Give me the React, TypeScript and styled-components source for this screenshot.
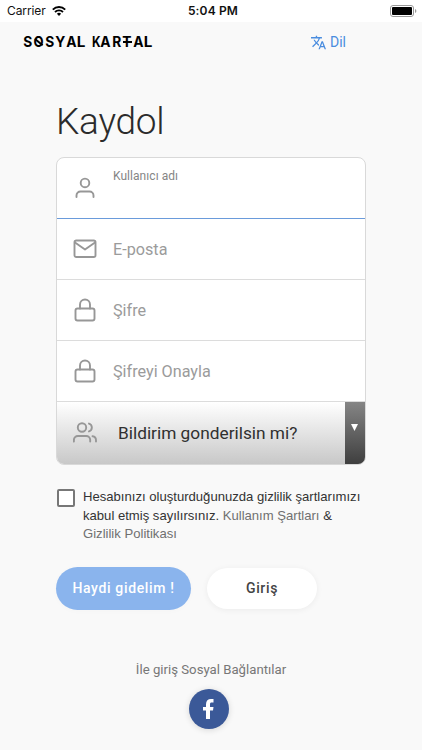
import React from 'react';
import styled, { createGlobalStyle } from 'styled-components';

const Global = createGlobalStyle`
  * { box-sizing: border-box; }
  body { margin: 0; background: #f9f9f9; font-family: Roboto, sans-serif; color: #333; }
`;

const Screen = styled.main`
  width: 422px;
  height: 750px;
  overflow: hidden;
  background: #f9f9f9;
`;

const StatusBar = styled.header`
  display: grid;
  grid-template-columns: 1fr auto 1fr;
  align-items: center;
  height: 22px;
  padding: 0 5px 0 7px;
  background: #fff;
  color: #111;
  font: 400 12px/22px Inter, sans-serif;
`;

const Carrier = styled.div`
  display: flex;
  align-items: center;
  gap: 6px;
  letter-spacing: -0.1px;
`;

const Clock = styled.div`
  margin-left: 2px;
  font-weight: 600;
  letter-spacing: 0.15px;
`;

const Battery = styled.svg`
  justify-self: end;
  display: block;
`;

const TopBar = styled.div`
  display: flex;
  justify-content: space-between;
  align-items: center;
  height: 40px;
  padding: 0 76px 0 22px;
`;

const Logo = styled.div`
  display: flex;
  color: #000;
  font: 700 14.5px/16px Inter, sans-serif;
`;

const Letter = styled.span<{ $w: number; $mark?: 'slash' | 'bar' }>`
  position: relative;
  display: flex;
  justify-content: center;
  width: ${(p) => p.$w}px;
  &::after {
    content: ${(p) => (p.$mark ? '""' : 'none')};
    position: absolute;
    left: 1px;
    right: 1px;
    top: 7px;
    height: 1.6px;
    background: #000;
    transform: ${(p) => (p.$mark === 'slash' ? 'rotate(40deg)' : 'none')};
  }
`;

const Glyph = styled.span<{ $scale: number }>`
  transform: scaleX(${(p) => p.$scale});
`;

const Language = styled.a`
  display: flex;
  align-items: center;
  gap: 4px;
  color: #4a8ddf;
  font-size: 14px;
  line-height: 16px;
`;

const Content = styled.section`
  padding: 0 56px;
`;

const Title = styled.h1`
  margin: 37px 0 0;
  height: 58px;
  font-weight: 300;
  font-size: 37px;
  line-height: 46px;
  letter-spacing: -0.25px;
  color: #2b2b2b;
`;

const Card = styled.form`
  display: grid;
  grid-template-rows: 61px 61px 61px 61px 62px;
  height: 308px;
  overflow: hidden;
  border: 1px solid #d9d9d9;
  border-radius: 8px;
  background: #fff;
`;

const Field = styled.label<{ $active?: boolean }>`
  display: flex;
  align-items: ${(p) => (p.$active ? 'flex-start' : 'center')};
  padding-left: 16px;
  border-bottom: 1px solid ${(p) => (p.$active ? '#6a9bdb' : '#dcdcdc')};
  color: #999;
`;

const FieldIcon = styled.svg<{ $drop?: number }>`
  flex: none;
  width: 24px;
  height: 24px;
  margin-top: ${(p) => p.$drop ?? 0}px;
  fill: none;
  stroke: #979797;
  stroke-width: 1.9;
  stroke-linecap: round;
  stroke-linejoin: round;
`;

const Label = styled.span<{ $small?: boolean }>`
  margin-left: 16px;
  margin-top: ${(p) => (p.$small ? 10 : 2)}px;
  font-size: ${(p) => (p.$small ? 12 : 16.2)}px;
  line-height: ${(p) => (p.$small ? 16 : 20)}px;
  letter-spacing: ${(p) => (p.$small ? 0.05 : 0)}px;
  color: ${(p) => (p.$small ? '#858585' : '#9b9b9b')};
`;

const Select = styled.div`
  display: flex;
  align-items: center;
  padding-left: 16px;
  background: linear-gradient(#fff, #c8c8c8);
`;

const SelectText = styled.span`
  flex: 1;
  margin-left: 21px;
  font-size: 17.3px;
  color: #303030;
`;

const Arrow = styled.div`
  display: grid;
  justify-items: center;
  align-self: stretch;
  width: 20px;
  padding: 22px 2px 0 0;
  background: linear-gradient(#858585, #3f3f3f);
`;

const Consent = styled.div`
  display: flex;
  gap: 8px;
  margin: 23px 0 0 1px;
`;

const Checkbox = styled.span`
  flex: none;
  width: 18px;
  height: 18px;
  margin-top: 1px;
  border: 2px solid #777;
  border-radius: 2px;
  background: #fff;
`;

const ConsentText = styled.p`
  margin: 0;
  color: #333;
  white-space: nowrap;
  font: 400 13.1px/18.5px "Liberation Sans", sans-serif;
`;

const Link = styled.a`
  color: #707070;
`;

const Actions = styled.div`
  display: flex;
  align-items: center;
  gap: 16px;
  margin-top: 23px;
`;

const Button = styled.button<{ $primary?: boolean }>`
  width: ${(p) => (p.$primary ? 135 : 110)}px;
  height: ${(p) => (p.$primary ? 43 : 41)}px;
  padding: 0;
  border: 0;
  border-radius: 22px;
  background: ${(p) => (p.$primary ? '#8ab4ed' : '#fff')};
  color: ${(p) => (p.$primary ? '#fff' : '#444')};
  box-shadow: 0 1px 6px rgba(0, 0, 0, ${(p) => (p.$primary ? 0.02 : 0.06)});
  font: 500 14px/20px Roboto, sans-serif;
  letter-spacing: 0.65px;
`;

const Social = styled.div`
  display: flex;
  flex-direction: column;
  align-items: center;
  gap: 10px;
  margin-top: 51px;
  font-size: 13.2px;
  line-height: 18px;
  color: #777;
`;

const Facebook = styled.a`
  display: grid;
  place-items: center;
  width: 40px;
  height: 40px;
  margin-right: 5px;
  border-radius: 50%;
  background: #3b5998;
  box-shadow: 0 1px 6px rgba(0, 0, 0, 0.14);
`;

const Lock = () => (
  <FieldIcon viewBox="0 0 24 24">
    <rect x="2.5" y="10.5" width="19" height="12" rx="2" />
    <path d="M7 10.5V6.5a5 5 0 0 1 10 0v4" />
  </FieldIcon>
);

const letters: [string, number, ('slash' | 'bar')?][] = [
  ['S', 10.5], ['O', 11.5, 'slash'], ['S', 10.5], ['Y', 11], ['A', 11], ['L', 10], [' ', 5],
  ['K', 9], ['A', 10.5], ['R', 11], ['T', 10.5, 'bar'], ['A', 11], ['L', 10],
];

const glyphScale: Record<string, number> = { K: 0.82, L: 1.05, O: 0.9 };

export default function App() {
  return (
    <Screen>
      <Global />
      <StatusBar>
        <Carrier>
          Carrier
          <svg width="14" height="10" viewBox="0 0 14 10" fill="none" stroke="#000" strokeWidth="1.9">
            <path d="M.8 3.6a8.8 8.8 0 0 1 12.4 0M3 6a5.8 5.8 0 0 1 8 0" />
            <path d="M4.9 7.7a3 3 0 0 1 4.2 0L7 9.9z" fill="#000" stroke="none" />
          </svg>
        </Carrier>
        <Clock>5:04 PM</Clock>
        <Battery width="27" height="12" viewBox="0 0 27 12">
          <rect x=".5" y=".5" width="23" height="11" rx="2.5" fill="#fff" stroke="#999" />
          <rect x="2" y="2" width="20" height="8" rx="1" fill="#000" />
          <path d="M25 4v4q1.4-.6 1.4-2T25 4z" fill="#999" />
        </Battery>
      </StatusBar>
      <TopBar>
        <Logo>
          {letters.map(([char, width, mark], i) => (
            <Letter key={i} $w={width} $mark={mark}>
              <Glyph $scale={glyphScale[char] ?? 0.95}>{char}</Glyph>
            </Letter>
          ))}
        </Logo>
        <Language>
          <svg width="15" height="15" viewBox="1 2 22 20" fill="#4a8ddf">
            <path d="M12.87 15.07l-2.54-2.51.03-.03A17.52 17.52 0 0 0 14.07 6H17V4h-7V2H8v2H1v2h11.17C11.5 7.92 10.44 9.75 9 11.35 8.07 10.32 7.3 9.19 6.69 8h-2c.73 1.63 1.73 3.17 2.98 4.56l-5.09 5.02L4 19l5-5 3.11 3.11.76-2.04zM18.5 10h-2L12 22h2l1.12-3h4.75L21 22h2l-4.5-12zm-2.62 7l1.62-4.33L19.12 17h-3.24z" />
          </svg>
          Dil
        </Language>
      </TopBar>
      <Content>
        <Title>Kaydol</Title>
        <Card>
          <Field $active>
            <FieldIcon viewBox="0 0 24 24" $drop={18}>
              <circle cx="12" cy="6.9" r="4.3" />
              <path d="M3.5 21v-1.5a4 4 0 0 1 4-4h9a4 4 0 0 1 4 4V21" />
            </FieldIcon>
            <Label $small>Kullanıcı adı</Label>
          </Field>
          <Field>
            <FieldIcon viewBox="0 0 24 24">
              <rect x="1.5" y="3.5" width="21" height="16.5" rx="1.8" />
              <path d="M2 5.5l10 7 10-7" />
            </FieldIcon>
            <Label>E-posta</Label>
          </Field>
          <Field><Lock /><Label>Şifre</Label></Field>
          <Field><Lock /><Label>Şifreyi Onayla</Label></Field>
          <Select>
            <FieldIcon viewBox="0 0 24 24">
              <circle cx="9" cy="6.5" r="4.2" />
              <path d="M.9 20.5V19a4 4 0 0 1 4-4h8.3a4 4 0 0 1 4 4v1.5M16 2.6a4.1 4.1 0 0 1 0 7.8M19.5 15.2a4 4 0 0 1 3.5 4v1.3" />
            </FieldIcon>
            <SelectText>Bildirim gonderilsin mi?</SelectText>
            <Arrow>
              <svg width="7" height="7" viewBox="0 0 7 7"><path d="M0 0h7L3.5 7z" fill="#fff" /></svg>
            </Arrow>
          </Select>
        </Card>
        <Consent>
          <Checkbox />
          <ConsentText>
            Hesabınızı oluşturduğunuzda gizlilik şartlarımızı<br />
            kabul etmiş sayılırsınız. <Link>Kullanım Şartları</Link> &amp;<br />
            <Link>Gizlilik Politikası</Link>
          </ConsentText>
        </Consent>
        <Actions>
          <Button $primary>Haydi gidelim !</Button>
          <Button>Giriş</Button>
        </Actions>
      </Content>
      <Social>
        İle giriş Sosyal Bağlantılar
        <Facebook>
          <svg width="11" height="20" viewBox="0 0 11 20" fill="#fff">
            <path d="M3 20V11.5H0V8h3V5.2C3 1.8 5 0 8 0h2.5v3.4H8.8C7.4 3.4 7 4 7 5.2V8h3.5L10 11.5H7V20z" />
          </svg>
        </Facebook>
      </Social>
    </Screen>
  );
}
